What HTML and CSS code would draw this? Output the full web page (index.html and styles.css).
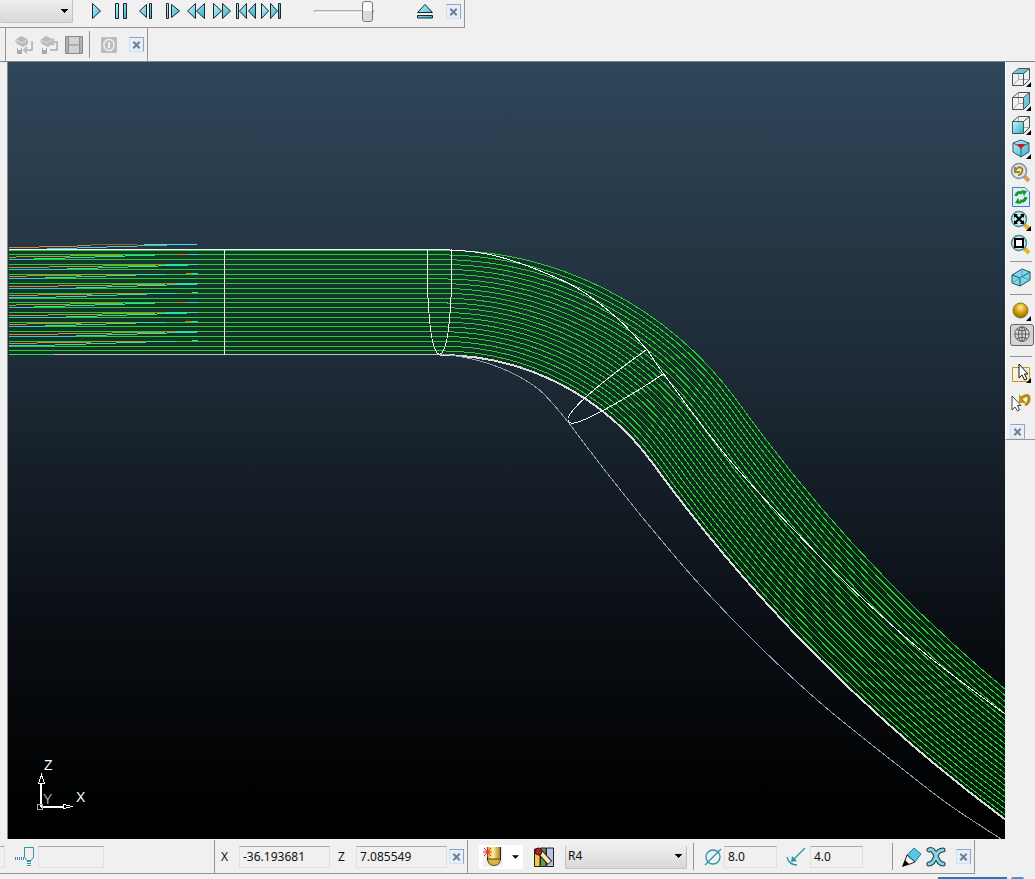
FILE: index.html
```
<!DOCTYPE html>
<html lang="en">
<head>
<meta charset="utf-8">
<title>Toolpath simulation</title>
<link rel="stylesheet" href="styles.css">
</head>
<body>
<svg class="defs" aria-hidden="true">
  <defs>
    <linearGradient id="cy" x1="0" y1="0" x2="1" y2="1"><stop offset="0" stop-color="#c4f3fb"/><stop offset="1" stop-color="#2fb0cf"/></linearGradient>
    <linearGradient id="au" x1="0" y1="0" x2="1" y2="0"><stop offset="0" stop-color="#e0a520"/><stop offset=".4" stop-color="#fff6b0"/><stop offset="1" stop-color="#a87b10"/></linearGradient>
    <radialGradient id="ball" cx=".5" cy=".3" r=".7"><stop offset="0" stop-color="#fff09a"/><stop offset=".45" stop-color="#dda916"/><stop offset="1" stop-color="#8a6200"/></radialGradient>
    <linearGradient id="sky" x1="0" y1="0" x2="0" y2="1"><stop offset="0" stop-color="#2f475a"/><stop offset=".35" stop-color="#202e3b"/><stop offset=".7" stop-color="#0b1016"/><stop offset=".96" stop-color="#000"/></linearGradient>
    <symbol id="frame" viewBox="0 0 22 22"><path d="M8.500 2.500V13.500H19.500M8.500 13.500L2.500 19.500" fill="none" stroke="#a3adb2"/><path d="M2.500 7.500H13.500V19.500H2.500ZM2.500 7.500L8.500 2.500H19.500L13.500 7.500M19.500 2.500V13.500L13.500 19.500" fill="none" stroke="#4b5256"/></symbol>
    <symbol id="lens" viewBox="0 0 22 22"><path d="M14 14L19 19" stroke="#e0b428" stroke-width="4"/><circle cx="9" cy="9" r="7.500" fill="#c6edf5" stroke="#4f8796" stroke-width="1.500"/></symbol>
  </defs>
</svg>

<header class="bars">
  <div class="bar playback">
    <select class="combo combo-top" aria-label="Toolpath"><option></option></select>
    <div class="keys">
      <button aria-label="Play"><svg viewBox="0 0 20 20"><path d="M6.500 2.500V17.500L14.500 10Z"/></svg></button>
      <button aria-label="Pause"><svg viewBox="0 0 20 20"><path d="M4.500 2.500H7.500V17.500H4.500ZM12.500 2.500H15.500V17.500H12.500Z"/></svg></button>
      <button aria-label="Step back"><svg viewBox="0 0 20 20"><path d="M10.500 3.500V16.500L3.500 10ZM13.500 2.500H15.500V17.500H13.500Z"/></svg></button>
      <button aria-label="Step forward"><svg viewBox="0 0 20 20"><path d="M10.500 3.500V16.500L18.500 10ZM5.500 2.500H7.500V17.500H5.500Z"/></svg></button>
      <button aria-label="Rewind"><svg viewBox="0 0 20 20"><path d="M9.500 2.500V17.500L1.500 10ZM18.500 2.500V17.500L10.500 10Z"/></svg></button>
      <button aria-label="Fast forward"><svg viewBox="0 0 20 20"><path d="M2.500 2.500V17.500L10.500 10ZM11.500 2.500V17.500L19.500 10Z"/></svg></button>
      <button aria-label="Go to start"><svg viewBox="0 0 20 20"><path d="M.500 2.500H2.500V17.500H.500ZM10.500 2.500V17.500L3.500 10ZM19.500 2.500V17.500L12.500 10Z"/></svg></button>
      <button aria-label="Go to end"><svg viewBox="0 0 20 20"><path d="M.500 2.500V17.500L7.500 10ZM9.500 2.500V17.500L16.500 10ZM17.500 2.500H19.500V17.500H17.500Z"/></svg></button>
    </div>
    <input class="speed" type="range" min="0" max="100" value="100" aria-label="Speed">
    <button class="ic eject" aria-label="Eject"><svg viewBox="0 0 20 20"><path d="M10 3.500L17.500 11.500H2.500ZM2.500 14.500H17.500V17H2.500Z" fill="url(#cy)" stroke="#16282e"/></svg></button>
    <button class="close" aria-label="Close playback bar"></button>
  </div>
  <div class="bar record">
    <button class="ic" disabled aria-label="Store view"><svg viewBox="0 0 20 20"><path d="M1 5L7 1L14 4V9L9 12L3 9Z" fill="#bbb"/><path d="M2 5L8 8L14 4" stroke="#e2e2e2" fill="none"/><path d="M3 13H8V19H3Z" fill="#aaa"/><path d="M4 13H7V15H4Z" fill="#eee"/><path d="M18 6V15H11M13 12L10 15L13 18" fill="none" stroke="#bdbdbd" stroke-width="2"/></svg></button>
    <button class="ic" disabled aria-label="Restore view"><svg viewBox="0 0 20 20"><path d="M1 5L7 1L14 4V9L9 12L3 9Z" fill="#bbb"/><path d="M2 5L8 8L14 4" stroke="#e2e2e2" fill="none"/><path d="M3 13H8V19H3Z" fill="#aaa"/><path d="M4 13H7V15H4Z" fill="#eee"/><path d="M11 15H18V7H13M15 4L12 7L15 10" fill="none" stroke="#bdbdbd" stroke-width="2"/></svg></button>
    <button class="ic" disabled aria-label="Save"><svg viewBox="0 0 20 20"><path d="M1.500 1.500H18.500V18.500H1.500Z" fill="#b0b0b0" stroke="#8a8a8a"/><path d="M5 2H15V9H5ZM5 11H15V18H5Z" fill="#d2d2d2"/><path d="M4.500 2V18M15.500 2V18" stroke="#909090"/></svg></button>
    <span class="vsep"></span>
    <button class="ic" disabled aria-label="Power"><svg viewBox="0 0 20 20"><rect x="2" y="2" width="16" height="16" rx="1" fill="#bdbdbd"/><ellipse cx="10" cy="10" rx="5" ry="5.500" fill="none" stroke="#f0f0f0" stroke-width="1.500"/><path d="M10 7V13" stroke="#f0f0f0" stroke-width="2"/></svg></button>
    <button class="close" aria-label="Close record bar"></button>
  </div>
</header>

<main class="work">
  <svg class="view" viewBox="8 62 997 777" preserveAspectRatio="xMinYMin slice" role="img" aria-label="Toolpath view">
    <rect x="8" y="62" width="997" height="777" fill="url(#sky)"/>
    <g id="paths" fill="none" shape-rendering="crispEdges"></g>
    <g fill="none" stroke="#f4f4f4" shape-rendering="crispEdges">
      <path d="M9 249.500H450M224.500 249V355"/>
      <path d="M427.500 249V286Q430 354 439.500 354Q449 354 451.500 286V249"/>
      <path d="M646 350Q575 401 568 418Q567 424 574 423C590 420 640 390 663 374"/>
    </g>
    <g fill="none" stroke="#fff" shape-rendering="crispEdges">
      <path d="M41 807V783M41 807H64" stroke-width="2"/>
      <path d="M38.500 783.500L41.500 775L44.500 783.500ZM63.500 804.500L72.500 806.500L63.500 808.500Z"/>
      <path d="M37.500 804.500H42.500V809.500H37.500Z" stroke="#aaa"/>
    </g>
    <g class="axis" fill="#fff"><text x="44" y="770">Z</text><text x="76" y="802">X</text><text x="43" y="804" fill="#aaa">Y</text></g>
  </svg>

  <aside class="side">
    <button class="ic" aria-label="Top view"><svg viewBox="0 0 22 22"><path d="M3 8L8 3H19L14 8Z" fill="#62c9e6"/><use href="#frame"/><path d="M21 16V21H16Z"/></svg></button>
    <button class="ic" aria-label="Right view"><svg viewBox="0 0 22 22"><path d="M14 8L19 3V14L14 19Z" fill="#62c9e6"/><use href="#frame"/><path d="M21 16V21H16Z"/></svg></button>
    <button class="ic" aria-label="Front view"><svg viewBox="0 0 22 22"><use href="#frame"/><path d="M3 8H13V19H3Z" fill="url(#cy)"/><path d="M21 16V21H16Z"/></svg></button>
    <button class="ic" aria-label="Isometric view"><svg viewBox="0 0 22 22"><path d="M3 5L11 2L19 5V14L11 19L3 14Z" fill="url(#cy)" stroke="#35586a"/><path d="M3 5L11 9L19 5M11 9V19" fill="none" stroke="#35586a"/><path d="M7 6H15L11 11Z" fill="#d01818"/><path d="M21 16V21H16Z"/></svg></button>
    <button class="ic" aria-label="Last view"><svg viewBox="0 0 22 22"><path d="M14 14L19 19" stroke="#d89a68" stroke-width="4"/><circle cx="9" cy="9" r="7.500" fill="#dbe6ee" stroke="#7d93a2" stroke-width="1.500"/><path d="M5 5V10H10M5 9C8 3 14 5 12 10Q11 13 8 13" fill="none" stroke="#a5811a" stroke-width="2"/></svg></button>
    <button class="ic" aria-label="Refresh"><svg viewBox="0 0 22 22"><path d="M2.500 1.500H15L19.500 6V20.500H2.500Z" fill="#dceefa" stroke="#4a7cb8"/><path d="M6 10Q7 5 12 7M16 11Q15 16 10 15" fill="none" stroke="#159a22" stroke-width="3"/><path d="M11 4L17 5L14 10ZM11 18L5 17L8 12Z" fill="#159a22"/></svg></button>
    <button class="ic" aria-label="Resize to fit"><svg viewBox="0 0 22 22"><use href="#lens"/><path d="M5 5L13 13M13 5L5 13" stroke="#000" stroke-width="2"/><path d="M4 4H8L4 8ZM14 4H10L14 8ZM4 14H8L4 10ZM14 14H10L14 10Z"/><path d="M21 16V21H16Z"/></svg></button>
    <button class="ic" aria-label="Zoom to box"><svg viewBox="0 0 22 22"><use href="#lens"/><path d="M5 5H13V13H5Z" fill="#fff" stroke="#000" stroke-width="2"/></svg></button>
    <span class="hsep"></span>
    <button class="ic" aria-label="Block"><svg viewBox="0 0 22 22"><path d="M2 8L12 2L20 5V13L10 19L2 16Z" fill="#7fd6ea" stroke="#1d5361"/><path d="M2 8L10 11L20 5M10 11V19" fill="none" stroke="#1d5361"/><path d="M12 2V10L2 16M12 10L20 13" fill="none" stroke="#4ba3b8"/></svg></button>
    <span class="hsep"></span>
    <button class="ic" aria-label="Plain shading"><svg viewBox="0 0 22 22"><circle cx="10.500" cy="10.500" r="7.500" fill="url(#ball)" stroke="#8c722a"/><path d="M21 16V21H16Z"/></svg></button>
    <button class="ic pressed" aria-label="Wireframe" aria-pressed="true"><svg viewBox="0 0 22 22"><g fill="none" stroke="#555"><circle cx="11" cy="10" r="8"/><ellipse cx="11" cy="10" rx="4" ry="8"/><path d="M3 10H19M5 5Q11 8 17 5M5 15Q11 12 17 15M11 2V18"/></g></svg></button>
    <span class="hsep far"></span>
    <button class="ic" aria-label="Select using a box"><svg viewBox="0 0 22 22"><path d="M2.500 5.500H19.500V19.500H2.500Z" fill="#f5f2e8" stroke="#c9980d"/><path d="M9 2V16L12 13L14.500 18L17 17L14.500 12H18Z" fill="#fff" stroke="#111"/><path d="M21 16V21H16Z"/></svg></button>
    <button class="ic spaced" aria-label="Undo selection"><svg viewBox="0 0 22 22"><path d="M2 5V19L5 16L7.500 20L9.500 19L7.500 14.500H11Z" fill="#fff" stroke="#444"/><path d="M10 8Q19 1 19 8Q19 12 15 14" fill="none" stroke="#b98a0c" stroke-width="3"/><path d="M9 3V12H16Z" fill="#c4940f"/></svg></button>
    <button class="close" aria-label="Close view bar"></button>
  </aside>
</main>

<footer class="foot">
  <div class="bar status">
    <input class="field edge" aria-label="Name">
    <svg class="glyph probe" viewBox="0 0 20 20"><g fill="none" stroke="#2e93a8"><path d="M9.500 .500H18.500V10L16 13.500H12L9.500 10Z"/><path d="M0 11.500H9" stroke-width="3" stroke-dasharray="1 1"/><path d="M14 14V20" stroke-width="4" stroke-dasharray="1 1"/></g></svg>
    <input class="field blank" aria-label="Tolerance">
    <div class="coords">
      <label for="cx">X</label><input class="field wide" id="cx" value="-36.193681">
      <label for="cz">Z</label><input class="field wide" id="cz" value="7.085549">
      <button class="close" aria-label="Close position bar"></button>
    </div>
    <div class="tools">
      <button class="drop" aria-label="Create tool"><svg class="toolpic" viewBox="0 0 20 20"><path d="M4.500 0V12Q5 18.500 11 18.500Q17 18.500 17.500 12V0Z" fill="url(#au)"/><path d="M4.500 12H17.500Q17 18.500 11 18.500Q5 18.500 4.500 12Z" fill="#d5b544" stroke="#5c4a10"/><path d="M17.500 0V13M4.500 8V13" stroke="#222"/><path d="M0 5H9M4.500 0V10M1 1L8 9M8 1L1 9" stroke="#d9301a"/></svg><svg class="arrow" viewBox="0 0 8 4"><path d="M0 0H8L4 4Z"/></svg></button>
      <button class="ic chart" aria-label="Tool list"><svg viewBox="0 0 20 20"><path d="M.500 2H6V19.500H.500Z" fill="#f1c83f" stroke="#222"/><path d="M6.500 1H12V19.500H6.500Z" fill="#5e9b59" stroke="#222"/><path d="M12.500 1H19.500V19.500H12.500Z" fill="#b6c2ec" stroke="#222"/><path d="M6 5L16 16" stroke="#222" stroke-width="6"/><path d="M7 6L15.500 15.500" stroke="#ffe3a0" stroke-width="4"/><circle cx="4.500" cy="4.500" r="3.500" fill="#b1202a" stroke="#401010"/></svg></button>
      <select class="combo tool" aria-label="Active tool"><option>R4</option></select>
    </div>
    <span class="vsep"></span>
    <div class="dims">
      <svg class="glyph" viewBox="0 0 20 20"><g fill="none" stroke="#2e93a8" stroke-width="1.300"><circle cx="10" cy="10" r="7"/><path d="M2 18L18 2"/></g></svg>
      <input class="field dim" value="8.0" aria-label="Diameter">
      <svg class="glyph rad" viewBox="0 0 20 20"><path d="M19 1L7 13M1 10Q3 18 11 18" fill="none" stroke="#2e93a8" stroke-width="1.300"/><path d="M5 15L6 9L11 14Z" fill="#2e93a8"/></svg>
      <input class="field dim" value="4.0" aria-label="Tip radius">
    </div>
    <span class="vsep"></span>
    <div class="edit">
      <button class="ic" aria-label="Edit tool"><svg viewBox="0 0 22 22"><path d="M13 2L20 8L14 16L6 9Z" fill="#57c5e3" stroke="#267c94"/><path d="M6 9L14 16L9 18L2 20Z" fill="#f3f3f3" stroke="#222"/><path d="M4 14L8 18L1 21Z"/></svg></button>
      <button class="ic" aria-label="Delete tool"><svg viewBox="0 0 22 22"><path d="M4 4Q8 2 11 10Q14 18 18 18M18 4Q13 4 11 10Q8 18 4 18" fill="none" stroke="#203c45" stroke-width="5" stroke-linecap="round"/><path d="M4 4Q8 2 11 10Q14 18 18 18M18 4Q13 4 11 10Q8 18 4 18" fill="none" stroke="#86d3e2" stroke-width="3" stroke-linecap="round"/></svg></button>
      <button class="close" aria-label="Close tool bar"></button>
    </div>
  </div>
  <div class="taskbar"><span class="blue"></span><span class="orb"></span></div>
</footer>
<script src="view.js"></script>
</body>
</html>
```
FILE: styles.css
```
* { box-sizing: border-box; }
html, body { height: 100%; }
body {
  margin: 0;
  display: flex;
  flex-direction: column;
  overflow: hidden;
  background: #f0f0f0;
  color: #111;
  font: 12px/16px "Noto Sans", "Open Sans", sans-serif;
}
.defs { position: absolute; width: 0; height: 0; }
button { flex: none; margin: 0; padding: 0; border: 0; background: none; }
svg { display: block; }
.bars { flex: none; }
.bar { display: flex; align-items: center; width: fit-content; }

.playback {
  height: 28px;
  padding: 0 3px 5px 0;
  border-right: 1px solid #969696;
  border-bottom: 1px solid #969696;
}
.combo {
  appearance: none;
  height: 24px;
  padding: 0 2px;
  border: 1px solid #c2c2c2;
  border-width: 0 1px 1px 1px;
  border-radius: 2px;
  color: #111;
  font: inherit;
  background:
    linear-gradient(to bottom left, #000 50%, transparent 50%) right 7px center / 4px 4px no-repeat,
    linear-gradient(to bottom right, #000 50%, transparent 50%) right 3px center / 4px 4px no-repeat,
    linear-gradient(#f0f0f0, #d8d8d8);
}
.combo-top { width: 73px; border-left: 0; }
.keys { display: flex; gap: 5px; margin-left: 13px; }
.keys svg { width: 20px; height: 20px; fill: url(#cy); stroke: #16282e; }
.speed { appearance: none; width: 60px; height: 20px; margin: 0 0 0 33px; background: none; }
.speed::-webkit-slider-runnable-track {
  height: 3px;
  border: 1px solid #b0b0b0;
  border-bottom-color: #fff;
  background: #ddd;
}
.speed::-webkit-slider-thumb {
  appearance: none;
  width: 11px;
  height: 21px;
  margin-top: -10px;
  border: 1px solid #777;
  border-radius: 3px;
  background: linear-gradient(#fafafa 45%, #d8d8d8 46%, #ddd);
}
.ic { width: 22px; height: 22px; }
.ic svg { width: 100%; height: 100%; }
.eject { width: 20px; height: 20px; margin: 0 11px 0 41px; }
.close {
  position: relative;
  width: 15px;
  height: 15px;
  border: 1px solid #d3e1ef;
  border-top-color: #8fa5bf;
  border-right-color: #8fa5bf;
  background: #e5effa;
}
.close::before, .close::after {
  content: "";
  position: absolute;
  left: 2px;
  top: 6px;
  width: 9px;
  height: 2px;
  background: #6d7f96;
  transform: rotate(45deg);
}
.close::after { transform: rotate(-45deg); }

.record {
  height: 33px;
  margin-left: 5px;
  padding: 0 3px 0 8px;
  gap: 5px;
  border-left: 1px solid #969696;
  border-right: 1px solid #969696;
}
.record .ic { width: 20px; height: 20px; }
.record .close { margin-left: 5px; }
.vsep { flex: none; width: 1px; height: 27px; background: #969696; }
.record .vsep { margin-right: 4px; }

.work {
  flex: 1;
  min-height: 0;
  display: flex;
  border-top: 1px solid #838383;
  padding-left: 7px;
}
.view { flex: 1; min-width: 0; height: 100%; border-left: 1px solid #888; }
.axis { font: 14px/16px "Liberation Sans", sans-serif; }
.side {
  flex: none;
  align-self: flex-start;
  width: 30px;
  display: flex;
  flex-direction: column;
  gap: 2px;
  padding: 4px 0 0 4px;
  border-left: 1px solid #fff;
  border-bottom: 1px solid #969696;
}
.hsep { height: 1px; margin: 3px 3px 3px 0; background: #969696; }
.far { margin-top: 8px; }
.side .pressed {
  width: 24px;
  padding: 0 1px;
  border: 1px solid #666;
  border-radius: 3px;
  background: #d4d4d4;
}
.spaced { margin-top: 5px; }
.side .close { margin: 9px 0 0 0; }

.foot { flex: none; }
.status {
  height: 34px;
  padding-right: 3px;
  border-right: 1px solid #969696;
  border-bottom: 1px solid #969696;
}
.foot .status { margin-top: 1px; }
.field {
  height: 22px;
  min-width: 0;
  padding: 0 3px;
  border: 1px solid #e0e0e4;
  border-top-color: #a9a9ad;
  border-radius: 1px;
  background: #f0f0f0;
  color: #111;
  font: inherit;
}
.edge { width: 5px; padding: 0; border-left: 0; }
.glyph { flex: none; width: 20px; height: 20px; }
.probe { margin: 0 3px 0 10px; }
.blank { width: 66px; }
.coords {
  display: flex;
  align-items: center;
  align-self: stretch;
  margin-left: 110px;
  padding: 0 3px 0 6px;
  border-left: 1px solid #969696;
  border-right: 1px solid #969696;
}
.coords label { width: 18px; }
.wide { width: 91px; margin-right: 8px; }
.coords .close { margin-left: -6px; }
.tools { display: flex; align-items: center; padding: 0 6px 0 11px; }
.drop {
  display: flex;
  align-items: center;
  gap: 9px;
  width: 44px;
  height: 24px;
  padding: 0 4px;
  background: #fff;
}
.toolpic { width: 20px; height: 20px; background: #f0f0f0; }
.arrow { width: 7px; height: 4px; }
.chart { width: 20px; height: 20px; margin: 0 11px 0 11px; }
.tool { width: 122px; }
.dims { display: flex; align-items: center; padding: 0 29px 0 9px; }
.dim { width: 53px; margin-left: 1px; }
.rad { margin: 0 3px 0 9px; }
.edit { display: flex; align-items: center; gap: 2px; padding-left: 8px; }
.edit .close { margin-left: 7px; }
.taskbar { display: flex; justify-content: flex-end; align-items: flex-end; gap: 4px; height: 5px; padding-right: 11px; overflow: hidden; }
.blue { width: 69px; height: 2px; background: #2678bd; }
.orb { width: 13px; height: 2px; border-radius: 6px 6px 0 0; background: #4a94cf; }
```
FILE: view.js
```
const layer = document.getElementById("paths");
const NS = "http://www.w3.org/2000/svg";

function draw(d, stroke, width) {
  const p = document.createElementNS(NS, "path");
  p.setAttribute("d", d);
  p.setAttribute("stroke", stroke);
  p.setAttribute("stroke-width", width);
  layer.appendChild(p);
}

// Offset of the bend: first arc is centred at (440, 618), second at (1992, -509).
function bend(t) {
  const r = 368 - t;
  const R = 1554 + t * 0.965;
  const a = 54 * Math.PI / 180;
  const x1 = 440 + r * Math.sin(a);
  const y1 = 618 - r * Math.cos(a);
  const b = 30 * Math.PI / 180;
  const x2 = 1992 - R * Math.sin(b);
  const y2 = -509 + R * Math.cos(b);
  return `L440 ${618 - r}A${r} ${r} 0 0 1 ${x1} ${y1}A${R} ${R} 0 0 0 ${x2} ${y2}`;
}

function smooth(pts) {
  let d = `M${pts[0]}`;
  for (let i = 0; i < pts.length - 1; i++) {
    const a = pts[Math.max(i - 1, 0)], b = pts[i], c = pts[i + 1], e = pts[Math.min(i + 2, pts.length - 1)];
    d += `C${b[0] + (c[0] - a[0]) / 6} ${b[1] + (c[1] - a[1]) / 6} ${c[0] - (e[0] - b[0]) / 6} ${c[1] - (e[1] - b[1]) / 6} ${c}`;
  }
  return d;
}

draw(`M9 302.500${bend(52.5)}`, "rgba(0,62,10,.45)", 104);
for (let k = 0; k < 22; k++) draw(`M9 ${250 + k * 4.8}${bend(k * 4.8)}`, "#2fc83c", 1);

draw(`M9 354.500${bend(104.5)}`, "#b8c4c8", 1);
const a = 54 * Math.PI / 180;
draw(`M440 355A263 263 0 0 1 ${440 + 263 * Math.sin(a)} ${618 - 263 * Math.cos(a)}A1655 1655 0 0 0 1164.500 924`, "#dcdcdc", 2);
draw("M9 354.500H54", "#35d660", 1);

draw(smooth([[450,250],[475,252],[500,257],[533,268],[577,288],[617,318],[647,350],[663,373],[733,464],[823,560],[877,612],[933,660],[1005,714]]), "#fff", 1);
draw(smooth([[440,355],[450,355],[480,361],[510,372],[537,388],[553,404],[568,422],[600,464],[647,523],[700,585],[760,647],[824,706],[900,767],[948,804],[1001,839]]), "#8ba0ae", 1);

// Lead-in moves coloured by feed rate.
const seg = (x1, x2, y, c) => { if (x2 > Math.max(x1, 9)) draw(`M${Math.max(x1, 9)} ${Math.round(y) + 0.5}H${x2}`, c, 1); };
const starts = [16, 49, 27, 58, 38, 16, 48, 27, 58, 37];
const tails = [176, 154, 186, 164, 195, 175, 154, 185, 164, 194];
starts.forEach((s, i) => {
  const y = 256 + i * 9.6;
  seg(9, s, y + 1, "#d8853f");
  seg(s, s + 54, y, "#c98a3c");
  seg(s + 54, s + 107, y - 1, "#8fb01c");
  seg(9, s + 18, y + 3, "#33c9d8");
  seg(s + 18, s + 49, y + 2, "#24e6a0");
  seg(s + 49, s + 79, y + 1, "#38cfa8");
  seg(s + 79, s + 109, y, "#48d0a8");
  seg(s + 109, Math.min(s + 139, 197), y - 1, "#20e898");
  seg(tails[i], Math.min(tails[i] + 14, 197), y - 2, "#b08a2a");
  seg(Math.min(tails[i] + 12, 192), 198, y - 2, "#2cdcc0");
});
seg(9, 39, 247, "#d8853f");
seg(39, 77, 246, "#d8853f");
seg(77, 91, 245, "#c98a3c");
seg(91, 137, 244, "#aa5a20");
seg(47, 77, 248, "#4cd6dc");
seg(77, 107, 247, "#4cd6dc");
seg(107, 137, 246, "#5ac8c8");
seg(137, 167, 245, "#6cb8a0");
seg(144, 197, 244, "#48d8e8");
```
